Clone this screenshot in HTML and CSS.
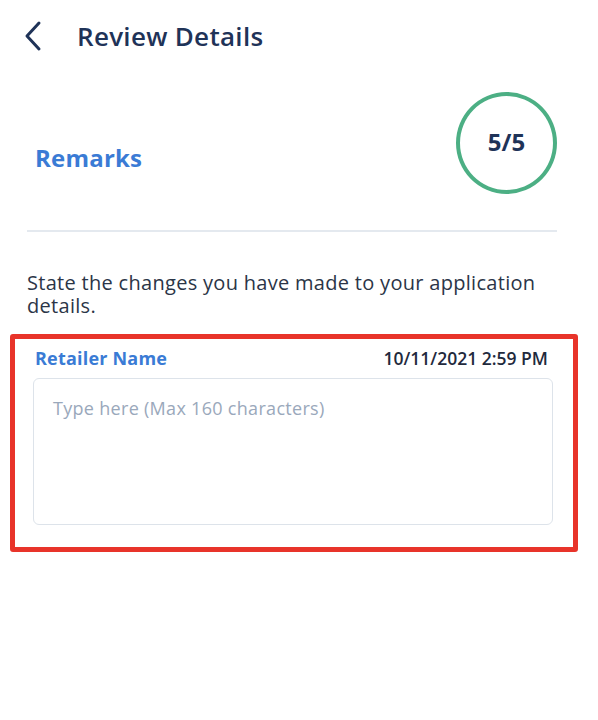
FILE: index.html
```html
<!DOCTYPE html>
<html lang="en">
<head>
  <meta charset="UTF-8" />
  <meta name="viewport" content="width=device-width, initial-scale=1.0" />
  <title>Review Details</title>
  <link rel="stylesheet" href="styles.css">
</head>
<body>
  <header class="topbar">
    <button class="back-btn" aria-label="Back">
      <svg width="20" height="32" viewBox="0 0 20 32">
        <path d="M16 3 L4 16 L16 29" fill="none" stroke="#1f3358" stroke-width="3" stroke-linecap="round" stroke-linejoin="round"/>
      </svg>
    </button>
    <h1 class="page-title">Review Details</h1>
  </header>

  <main class="content">
    <div class="step-row">
      <h2 class="step-title">Remarks</h2>
      <div class="step-count">5/5</div>
    </div>
    <hr class="divider">
    <p class="hint">State the changes you have made to your application details.</p>

    <div class="remark-card">
      <div class="remark-head">
        <span class="remark-label">Retailer Name</span>
        <span class="remark-date">10/11/2021 2:59 PM</span>
      </div>
      <textarea class="remark-input" maxlength="160" placeholder="Type here (Max 160 characters)"></textarea>
    </div>
  </main>
</body>
</html>
```

FILE: styles.css
```css
body {
  margin: 0;
  background: #fff;
  font-family: "Open Sans", Lato, sans-serif;
  color: #1f3358;
}

.topbar {
  display: flex;
  align-items: center;
  height: 72px;
  padding-left: 23px;
}
.back-btn {
  border: 0;
  background: none;
  padding: 0;
  margin-right: 34px;
  display: flex;
  cursor: pointer;
}
.page-title {
  margin: 0;
  font-size: 26px;
  font-weight: 600;
  letter-spacing: 0.3px;
  color: #1f3358;
}

.content {
  padding: 0 41px 0 27px;
}
.step-row {
  display: flex;
  justify-content: space-between;
  align-items: center;
  padding-top: 20px;
  padding-left: 8px;
}
.step-title {
  margin: 28px 0 0;
  font-size: 24px;
  font-weight: 700;
  letter-spacing: 0.2px;
  color: #3a7bd5;
}
.step-count {
  width: 93px;
  height: 90px;
  border: 4px solid #4caf84;
  border-radius: 50%;
  display: flex;
  align-items: center;
  justify-content: center;
  font-size: 24px;
  font-weight: 700;
  color: #1f3358;
  padding-bottom: 4px;
}
.divider {
  border: 0;
  border-top: 2px solid #e4e9ef;
  margin: 36px 0 0;
}
.hint {
  margin: 39px 0 0;
  font-size: 20px;
  line-height: 23px;
  letter-spacing: 0.3px;
  color: #2b3547;
}

.remark-card {
  margin: 17px -21px 0 -17px;
  border: 5px solid #e8342a;
  border-radius: 3px;
  padding: 7px 20px 22px 18px;
}
.remark-head {
  display: flex;
  justify-content: space-between;
  align-items: center;
  line-height: 24px;
  padding-left: 2px;
  padding-right: 5px;
  margin-bottom: 8px;
}
.remark-label {
  font-size: 18px;
  font-weight: 700;
  letter-spacing: 0.2px;
  color: #3a7bd5;
}
.remark-date {
  font-size: 17.5px;
  font-weight: 600;
  color: #1f2a3d;
}
.remark-input {
  display: block;
  width: 100%;
  box-sizing: border-box;
  height: 147px;
  border: 1px solid #dde3ea;
  border-radius: 6px;
  padding: 17px 19px;
  font-family: inherit;
  font-size: 18px;
  letter-spacing: 0.3px;
  resize: none;
  outline: none;
}
.remark-input::placeholder {
  color: #9aa8bb;
}
```
